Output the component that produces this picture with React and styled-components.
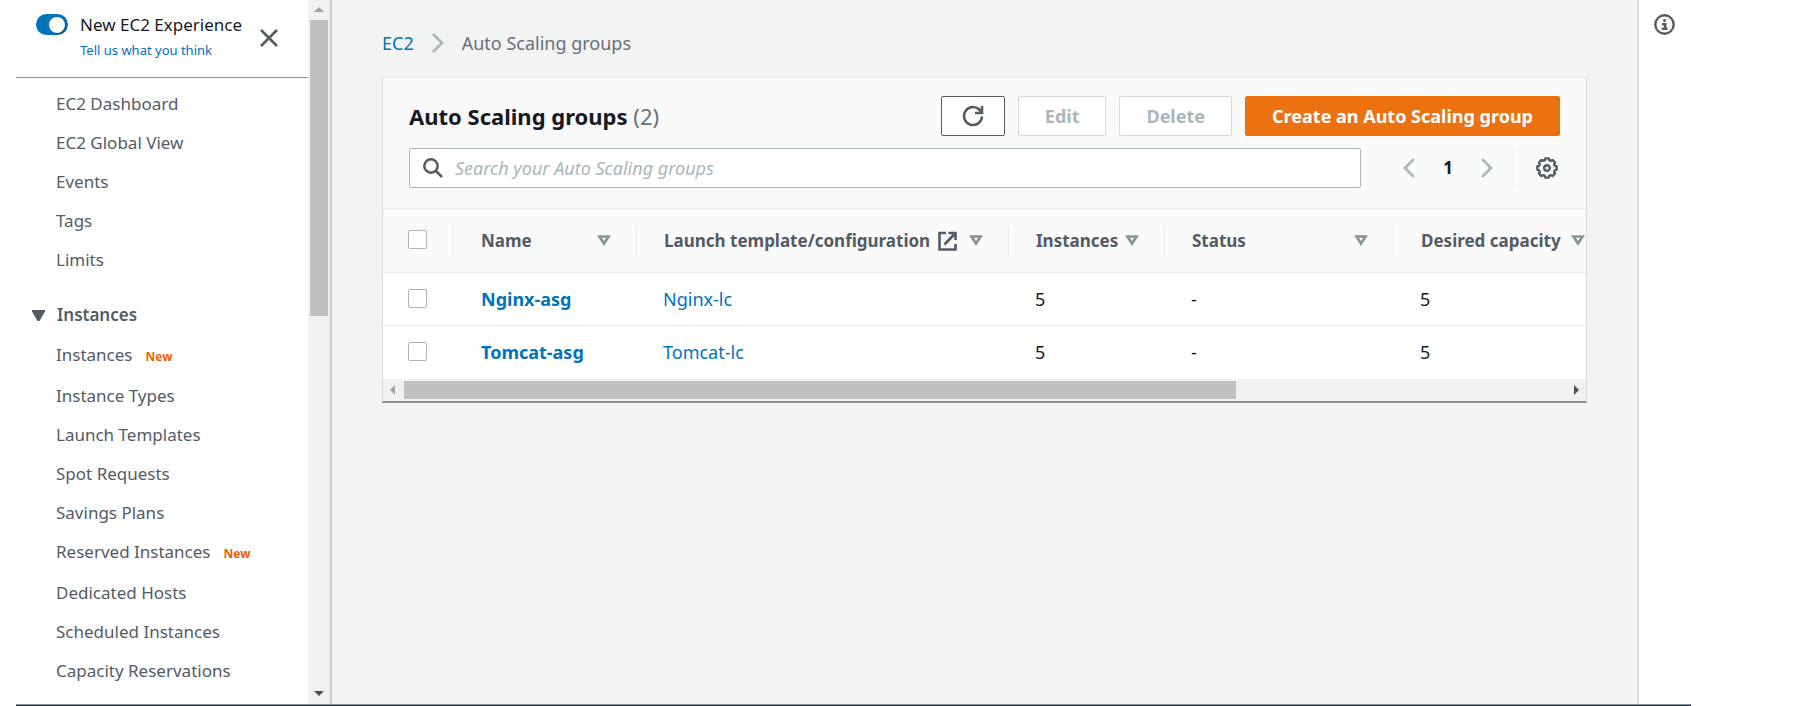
import React from "react";
import styled, { createGlobalStyle } from "styled-components";

const GlobalStyle = createGlobalStyle`
  *, *::before, *::after { box-sizing: border-box; }
  body {
    margin: 0;
    background: #fff;
    color: #16191f;
    font-family: "Noto Sans", "Open Sans", sans-serif;
    font-size: 17px;
    line-height: 24px;
  }
  button, input { font: inherit; }
  a { color: #0073bb; text-decoration: none; }
  svg { display: block; flex: none; }
`;

const Page = styled.div`
  display: flex;
  flex-direction: column;
  height: 100vh;
  padding-left: 16px;
`;

const Shell = styled.div`
  display: grid;
  grid-template-columns: 316px minmax(0, 1fr) 176px;
  flex: 1;
  min-height: 0;
`;

const FooterEdge = styled.footer`
  height: 2px;
  margin-right: 122px;
  background: #232f3e;
  border-top: 1px solid #878c93;
`;

const Sidebar = styled.aside`
  display: flex;
  border-right: 2px solid #c9cdcd;
  min-height: 0;
`;

const SidebarContent = styled.div`
  flex: 1;
  overflow: hidden;
`;

const SidebarHeader = styled.div`
  display: flex;
  align-items: flex-start;
  height: 78px;
  padding: 13px 30px 0 20px;
  border-bottom: 1px solid #879196;
`;

const Toggle = styled.input`
  appearance: none;
  flex: none;
  width: 32px;
  height: 21px;
  margin: 1px 12px 0 0;
  border-radius: 11px;
  background: #0073bb;

  &::before {
    content: "";
    display: block;
    width: 16px;
    height: 16px;
    margin: 3px 0 0 13px;
    border-radius: 50%;
    background: #fff;
    box-shadow: 1px 1px 1px rgba(0, 0, 0, 0.35);
  }
`;

const ExperienceText = styled.div`
  display: flex;
  flex-direction: column;
  flex: 1;
  white-space: nowrap;
`;

const FeedbackLink = styled.a`
  margin-top: 3px;
  font-size: 13px;
  line-height: 20px;
`;

const IconButton = styled.button`
  display: flex;
  align-items: center;
  justify-content: center;
  padding: 0;
  border: 0;
  background: none;
  color: #545b64;
`;

const CloseButton = styled(IconButton)`
  margin-top: 16px;
`;

const NavList = styled.ul`
  margin: 0;
  padding: ${(p) => (p.$first ? "6px" : "0")} 0 0 40px;
  list-style: none;
`;

const NavItem = styled.li`
  display: flex;
  align-items: center;
  height: ${(p) => (p.$tall ? "41px" : "39px")};
  padding-bottom: ${(p) => (p.$tall ? "2px" : "0")};
  white-space: nowrap;

  a { color: #545b64; }
`;

const NewBadge = styled.span`
  margin: 4px 0 0 13px;
  color: #eb5f07;
  font-size: 12px;
  font-weight: 700;
  line-height: 16px;
`;

const SectionButton = styled.button`
  display: flex;
  align-items: center;
  gap: 12px;
  height: 40px;
  margin-top: 16px;
  padding: 0 0 0 16px;
  border: 0;
  background: none;
  color: #545b64;
  font-weight: 600;
`;

const VerticalTrack = styled.div`
  display: flex;
  flex-direction: column;
  align-items: center;
  width: 22px;
  padding: 7px 0 8px;
  background: #f1f1f1;

  svg:last-child { margin-top: auto; }
`;

const VerticalThumb = styled.div`
  width: 18px;
  height: 43%;
  margin-top: 8px;
  background: #c1c1c1;
`;

const Main = styled.main`
  padding: 31px 50px 0;
  background: #f2f3f3;
`;

const Breadcrumb = styled.nav`
  display: flex;
  align-items: center;
  gap: 18px;
  height: 24px;
  margin-bottom: 22px;
  color: #687078;
  font-size: 18px;
`;

const Card = styled.section`
  border: 1px solid #d5dbdb;
  border-top-color: #eaeded;
  border-bottom: 2px solid #879196;
  background: #fafafa;
`;

const CardHeader = styled.header`
  display: flex;
  align-items: center;
  gap: 13px;
  padding: 18px 26px 0;
`;

const Title = styled.h1`
  flex: 1;
  margin: 0;
  font-size: 22px;
  font-weight: 700;
  line-height: 32px;

  span { color: #687078; font-weight: 400; }
`;

const Button = styled.button`
  display: flex;
  align-items: center;
  justify-content: center;
  height: 40px;
  padding: 0 ${(p) => (p.$icon ? "20px" : "26px")};
  border: 1px solid ${(p) => (p.$primary ? "#ec7211" : p.disabled ? "#d5dbdb" : "#545b64")};
  border-radius: 2px;
  background: ${(p) => (p.$primary ? "#ec7211" : "#fff")};
  color: ${(p) => (p.$primary ? "#fff" : p.disabled ? "#aab7b8" : "#545b64")};
  font-size: 18px;
  font-weight: 700;
  white-space: nowrap;
`;

const Toolbar = styled.div`
  display: flex;
  align-items: center;
  padding: 12px 28px 20px 26px;
`;

const SearchBox = styled.label`
  display: flex;
  align-items: center;
  gap: 12px;
  flex: 1;
  height: 40px;
  padding: 0 13px;
  border: 1px solid #aab7b8;
  border-radius: 2px;
  background: #fff;
  color: #545b64;
`;

const SearchInput = styled.input`
  flex: 1;
  min-width: 0;
  padding: 0;
  border: 0;
  outline: 0;
  background: none;
  font-size: 18px;

  &::placeholder { color: #aab7b8; font-style: italic; opacity: 1; }
`;

const Pagination = styled.nav`
  display: flex;
  align-items: center;
  justify-content: space-between;
  width: 90px;
  margin: 0 20px 0 42px;
`;

const PageButton = styled(IconButton)`
  color: #16191f;
  font-weight: 700;
`;

const Settings = styled.div`
  display: flex;
  align-items: center;
  height: 40px;
  padding-left: 22px;
  border-left: 1px solid #eaeded;
`;

const TableViewport = styled.div`
  overflow-x: auto;
  scrollbar-width: none;
`;

const Table = styled.table`
  width: 1684px;
  border-collapse: collapse;
  table-layout: fixed;
`;

const HeadCell = styled.th`
  height: 64px;
  padding: 0;
  border-top: 1px solid #eaeded;
  text-align: left;
`;

const HeadContent = styled.div`
  display: flex;
  align-items: center;
  gap: ${(p) => (p.$wideGap ? "8px" : "6px")};
  height: 32px;
  padding: 0 25px 0 ${(p) => (p.$select ? "25px" : "27px")};
  border-right: 1px solid #eaeded;
  color: #545b64;
  font-weight: 700;
  white-space: nowrap;
`;

const SortButton = styled(IconButton)`
  margin-left: ${(p) => (p.$adjacent ? "4px" : "auto")};
  color: #879596;
`;

const Cell = styled.td`
  height: 53px;
  padding: 0 0 0 ${(p) => (p.$select ? "25px" : p.$strong ? "27px" : "26px")};
  border-top: 1px solid #eaeded;
  background: #fff;
  font-size: 18px;
  font-weight: ${(p) => (p.$strong ? 700 : 400)};
`;

const Checkbox = styled.input`
  appearance: none;
  display: block;
  width: 19px;
  height: 19px;
  margin: 0 0 2px;
  border: 1px solid #aab7b8;
  border-radius: 2px;
  background: #fff;
`;

const HorizontalTrack = styled.div`
  display: flex;
  align-items: center;
  height: 22px;
  padding: 0 7px;
  border-top: 1px solid #eaeded;
  background: #f1f1f1;

  svg:last-child { margin-left: auto; }
`;

const HorizontalThumb = styled.div`
  width: 70%;
  height: 18px;
  margin-left: 9px;
  background: #c1c1c1;
`;

const HelpPanel = styled.aside`
  padding: 14px 15px;
  border-left: 2px solid #d5dbdb;
`;

function Arrow({ dir, color }) {
  const paths = {
    up: "M0 5L5 0l5 5z",
    down: "M0 0h10L5 5z",
    left: "M5 0v10L0 5z",
    right: "M0 0v10l5-5z",
  };
  const vertical = dir === "up" || dir === "down";
  return (
    <svg width={vertical ? 10 : 5} height={vertical ? 5 : 10} fill={color} aria-hidden="true">
      <path d={paths[dir]} />
    </svg>
  );
}

function Chevron({ flip }) {
  return (
    <svg width="12" height="20" viewBox="0 0 12 20" fill="none" stroke="#aab7b8" strokeWidth="2.6" aria-hidden="true">
      <path d={flip ? "M11 1L2 10l9 9" : "M1 1l9 9-9 9"} />
    </svg>
  );
}

function ExternalIcon() {
  return (
    <svg width="19" height="20" viewBox="0 0 19 20" fill="none" stroke="currentColor" strokeWidth="2.6" role="img" aria-label="Opens in a new tab">
      <path d="M8 2H1.500v16.500h16V13M10.500 2h7v7M17 2.500L6.500 13.500" />
    </svg>
  );
}

const gearOutline = Array.from({ length: 8 }, (_, i) => {
  const at = (deg, r) => {
    const a = ((i * 45 + deg) * Math.PI) / 180;
    return `${(11 + r * Math.sin(a)).toFixed(2)} ${(11 - r * Math.cos(a)).toFixed(2)}`;
  };
  return `${at(-11, 9.8)}L${at(11, 9.8)}L${at(15, 8.2)}L${at(30, 8.2)}`;
}).join("L");

function GearIcon() {
  return (
    <svg width="22" height="22" viewBox="0 0 22 22" fill="none" stroke="currentColor" strokeWidth="2.4" strokeLinejoin="round" aria-hidden="true">
      <path d={`M${gearOutline}z`} />
      <circle cx="11" cy="11" r="2.8" />
    </svg>
  );
}

const primaryNav = ["EC2 Dashboard", "EC2 Global View", "Events", "Tags", "Limits"];

const instanceNav = [
  { label: "Instances", isNew: true },
  { label: "Instance Types" },
  { label: "Launch Templates" },
  { label: "Spot Requests" },
  { label: "Savings Plans" },
  { label: "Reserved Instances", isNew: true },
  { label: "Dedicated Hosts" },
  { label: "Scheduled Instances" },
  { label: "Capacity Reservations" },
];

const columns = [
  { label: "Name", width: 183 },
  { label: "Launch template/configuration", width: 372, external: true },
  { label: "Instances", width: 156 },
  { label: "Status", width: 229 },
  { label: "Desired capacity", width: 673, adjacent: true },
];

const groups = [
  { name: "Nginx-asg", template: "Nginx-lc", instances: 5, status: "-", desired: 5 },
  { name: "Tomcat-asg", template: "Tomcat-lc", instances: 5, status: "-", desired: 5 },
];

function Navigation() {
  return (
    <Sidebar>
      <SidebarContent>
        <SidebarHeader>
          <Toggle type="checkbox" role="switch" id="new-experience" defaultChecked />
          <ExperienceText>
            <label htmlFor="new-experience">New EC2 Experience</label>
            <FeedbackLink href="#feedback">Tell us what you think</FeedbackLink>
          </ExperienceText>
          <CloseButton type="button" aria-label="Close navigation">
            <svg width="18" height="18" viewBox="0 0 18 18" stroke="currentColor" strokeWidth="2.6" aria-hidden="true">
              <path d="M1 1l16 16M17 1L1 17" />
            </svg>
          </CloseButton>
        </SidebarHeader>
        <nav aria-label="EC2">
          <NavList $first>
            {primaryNav.map((label) => (
              <NavItem key={label}><a href="#nav">{label}</a></NavItem>
            ))}
          </NavList>
          <SectionButton type="button" aria-expanded="true">
            <svg width="13" height="11" viewBox="0 0 13 11" fill="currentColor" aria-hidden="true">
              <path d="M0 0h13v1.500L7.500 11h-2L0 1.500z" />
            </svg>
            Instances
          </SectionButton>
          <NavList>
            {instanceNav.map(({ label, isNew }) => (
              <NavItem key={label} $tall={isNew}>
                <a href="#nav">{label}</a>
                {isNew && <NewBadge>New</NewBadge>}
              </NavItem>
            ))}
          </NavList>
        </nav>
      </SidebarContent>
      <VerticalTrack aria-hidden="true">
        <Arrow dir="up" color="#a3a3a3" />
        <VerticalThumb />
        <Arrow dir="down" color="#505050" />
      </VerticalTrack>
    </Sidebar>
  );
}

function GroupsTable() {
  return (
    <TableViewport>
      <Table>
        <colgroup>
          <col width="71" />
          {columns.map((c) => <col key={c.label} width={c.width} />)}
        </colgroup>
        <thead>
          <tr>
            <HeadCell>
              <HeadContent $select>
                <Checkbox type="checkbox" aria-label="Select all groups" />
              </HeadContent>
            </HeadCell>
            {columns.map((c) => (
              <HeadCell key={c.label} scope="col">
                <HeadContent $wideGap={c.external}>
                  {c.label}
                  {c.external && <ExternalIcon />}
                  <SortButton type="button" $adjacent={c.adjacent} aria-label={`Sort by ${c.label}`}>
                    <svg width="14" height="11" viewBox="0 0 14 11" fill="none" stroke="currentColor" strokeWidth="2.7" aria-hidden="true">
                      <path d="M2.500 1.500h9L7 8.500z" />
                    </svg>
                  </SortButton>
                </HeadContent>
              </HeadCell>
            ))}
          </tr>
        </thead>
        <tbody>
          {groups.map((g) => (
            <tr key={g.name}>
              <Cell $select><Checkbox type="checkbox" aria-label={`Select ${g.name}`} /></Cell>
              <Cell $strong><a href="#group">{g.name}</a></Cell>
              <Cell><a href="#template">{g.template}</a></Cell>
              <Cell>{g.instances}</Cell>
              <Cell>{g.status}</Cell>
              <Cell>{g.desired}</Cell>
            </tr>
          ))}
        </tbody>
      </Table>
    </TableViewport>
  );
}

export default function App() {
  return (
    <>
      <GlobalStyle />
      <Page>
        <Shell>
          <Navigation />
          <Main>
            <Breadcrumb aria-label="Breadcrumb">
              <a href="#ec2">EC2</a>
              <Chevron />
              <span>Auto Scaling groups</span>
            </Breadcrumb>
            <Card>
              <CardHeader>
                <Title>Auto Scaling groups <span>(2)</span></Title>
                <Button type="button" $icon aria-label="Refresh">
                  <svg width="22" height="22" viewBox="0 0 22 22" fill="none" stroke="currentColor" strokeWidth="2.6" aria-hidden="true">
                    <path d="M20 11.500a9 9 0 1 1-3-7.200L19.500 7M20 1v7h-7" />
                  </svg>
                </Button>
                <Button type="button" disabled>Edit</Button>
                <Button type="button" disabled>Delete</Button>
                <Button type="button" $primary>Create an Auto Scaling group</Button>
              </CardHeader>
              <Toolbar>
                <SearchBox>
                  <svg width="20" height="20" viewBox="0 0 20 20" fill="none" stroke="currentColor" strokeWidth="2.5" aria-hidden="true">
                    <circle cx="8" cy="8" r="6.700" />
                    <path d="M13 13l6 6" />
                  </svg>
                  <SearchInput type="text" aria-label="Search groups" placeholder="Search your Auto Scaling groups" />
                </SearchBox>
                <Pagination aria-label="Pages">
                  <IconButton type="button" aria-label="Previous page"><Chevron flip /></IconButton>
                  <PageButton type="button">1</PageButton>
                  <IconButton type="button" aria-label="Next page"><Chevron /></IconButton>
                </Pagination>
                <Settings>
                  <IconButton type="button" aria-label="Preferences"><GearIcon /></IconButton>
                </Settings>
              </Toolbar>
              <GroupsTable />
              <HorizontalTrack aria-hidden="true">
                <Arrow dir="left" color="#a3a3a3" />
                <HorizontalThumb />
                <Arrow dir="right" color="#505050" />
              </HorizontalTrack>
            </Card>
          </Main>
          <HelpPanel>
            <IconButton type="button" aria-label="Open help panel">
              <svg width="21" height="21" viewBox="0 0 21 21" fill="none" stroke="currentColor" strokeWidth="2.4" aria-hidden="true">
                <circle cx="10.500" cy="10.500" r="9.200" />
                <path d="M10.500 5v3M8 10.200h3.300v4.600M7.700 14.800h5.800" />
              </svg>
            </IconButton>
          </HelpPanel>
        </Shell>
        <FooterEdge />
      </Page>
    </>
  );
}
